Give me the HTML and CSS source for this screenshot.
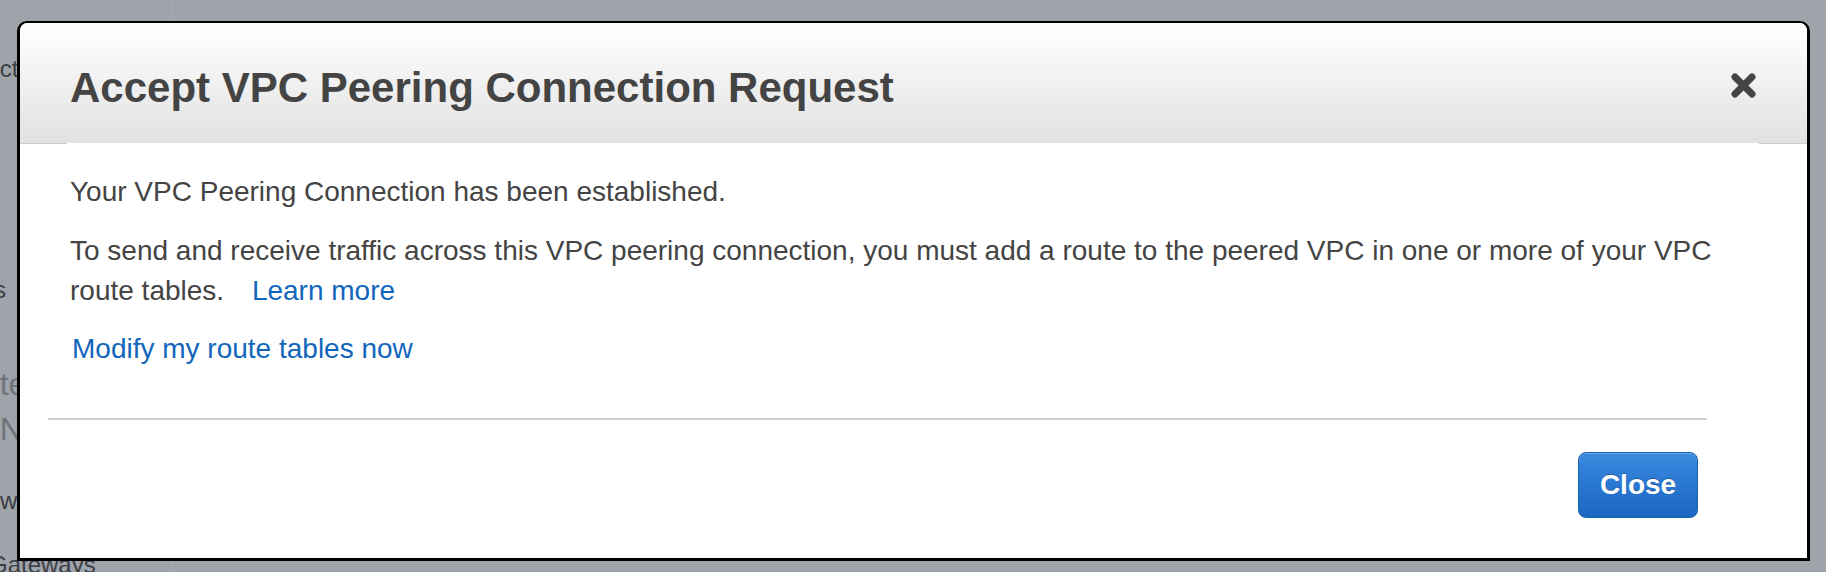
FILE: index.html
```html
<!DOCTYPE html>
<html lang="en">
<head>
  <meta charset="UTF-8">
  <meta name="viewport" content="width=device-width, initial-scale=1.0">
  <title>Accept VPC Peering Connection Request</title>
  <link rel="stylesheet" href="styles.css">
</head>
<body>
  <div class="page">
    <nav class="sidebar">
      <div class="nav-item item-1">Connections</div>
      <div class="nav-item item-2">Subnets</div>
      <div class="nav-item item-3">Route</div>
      <div class="nav-item item-4">VPN</div>
      <div class="nav-item item-5">Gateways</div>
      <div class="nav-item item-6">Gateways</div>
    </nav>
    <div class="main"></div>
  </div>

  <div class="modal">
    <div class="modal-header">
      <h2 class="modal-title">Accept VPC Peering Connection Request</h2>
      <button class="close-x" aria-label="Close">
        <svg width="25" height="25" viewBox="0 0 25 25">
          <path d="M4 4 L21 21 M21 4 L4 21" stroke="#444" stroke-width="7" stroke-linecap="round"/>
        </svg>
      </button>
    </div>
    <div class="modal-body">
      <p class="msg">Your VPC Peering Connection has been established.</p>
      <p class="msg">To send and receive traffic across this VPC peering connection, you must add a route to the peered VPC in one or more of your VPC route tables. <a href="#" class="learn">Learn more</a></p>
      <a href="#" class="modify">Modify my route tables now</a>
    </div>
    <div class="modal-footer">
      <hr class="divider">
      <div class="actions">
        <button class="btn-close">Close</button>
      </div>
    </div>
  </div>
</body>
</html>
```

FILE: styles.css
```css
html, body {
  margin: 0;
  padding: 0;
}
body {
  width: 1826px;
  height: 572px;
  overflow: hidden;
  background-color: #9fa3aa;
  font-family: "Liberation Sans", Arial, Helvetica, sans-serif;
  position: relative;
}
.page {
  display: flex;
  height: 100%;
}
.sidebar {
  width: 172px;
  border-right: 1px solid #a6aab1;
  display: flex;
  flex-direction: column;
  overflow: hidden;
}
.nav-item {
  white-space: nowrap;
  color: #3b3e44;
  font-size: 24px;
}
.item-1 {
  margin-top: 55px;
  margin-left: -71px;
}
.item-2 {
  margin-top: 193px;
  margin-left: -82px;
}
.item-3 {
  margin-top: 62px;
  margin-left: -59px;
  color: #6f737a;
  font-size: 32px;
}
.item-4 {
  margin-top: 8px;
  margin-left: -43px;
  color: #6f737a;
  font-size: 32px;
}
.item-5 {
  margin-top: 39px;
  margin-left: -52px;
}
.item-6 {
  margin-top: 36px;
  margin-left: -11px;
}
.main {
  flex: 1;
}

/* modal */
.modal {
  position: absolute;
  left: 17px;
  top: 21px;
  width: 1793px;
  height: 540px;
  box-sizing: border-box;
  background-color: #fff;
  border: 3px solid #000;
  border-top-width: 2px;
  border-radius: 10px 10px 0 0;
  display: flex;
  flex-direction: column;
}
.modal-header {
  height: 121px;
  box-sizing: border-box;
  display: flex;
  justify-content: space-between;
  align-items: center;
  padding: 9px 51px 0 50px;
  border-radius: 8px 8px 0 0;
  background: linear-gradient(to bottom, #ffffff 0%, #f2f2f2 45%, #e1e1e1 100%);
  border-bottom: 1px solid transparent;
  border-image: linear-gradient(to right, #cccccc 0 48px, transparent 48px calc(100% - 49px), #cccccc calc(100% - 49px)) 1;
}
.modal-title {
  margin: 0;
  font-size: 42px;
  font-weight: bold;
  color: #444;
}
.close-x {
  background: none;
  border: none;
  padding: 0;
  width: 25px;
  height: 25px;
  cursor: pointer;
  margin-top: -4px;
}
.close-x svg {
  display: block;
}
.modal-body {
  padding: 28px 50px 0 50px;
  font-size: 28px;
  line-height: 40px;
  color: #444;
}
.msg {
  margin: 0 0 19px 0;
}
.msg + .msg {
  margin-bottom: 18px;
}
a {
  color: #1166bb;
  text-decoration: none;
}
.learn {
  margin-left: 20px;
}
.modify {
  display: block;
  margin-left: 2px;
}
.modal-footer {
  padding-top: 49px;
}
.divider {
  margin: 0 100px 0 28px;
  border: none;
  border-top: 2px solid #cfcfcf;
}
.actions {
  display: flex;
  justify-content: flex-end;
  padding: 32px 109px 0 0;
}
.btn-close {
  width: 120px;
  height: 66px;
  box-sizing: border-box;
  border: 1px solid #1b5fb0;
  border-radius: 8px;
  background: linear-gradient(to bottom, #3a8be0 0%, #2a77d2 50%, #1b66c0 100%);
  box-shadow: inset 0 1px 0 rgba(255, 255, 255, 0.25);
  color: #fff;
  font-family: "Liberation Sans", Arial, Helvetica, sans-serif;
  font-size: 28px;
  font-weight: bold;
  text-shadow: 0 -1px 0 rgba(0, 0, 0, 0.3);
  cursor: pointer;
}
```
